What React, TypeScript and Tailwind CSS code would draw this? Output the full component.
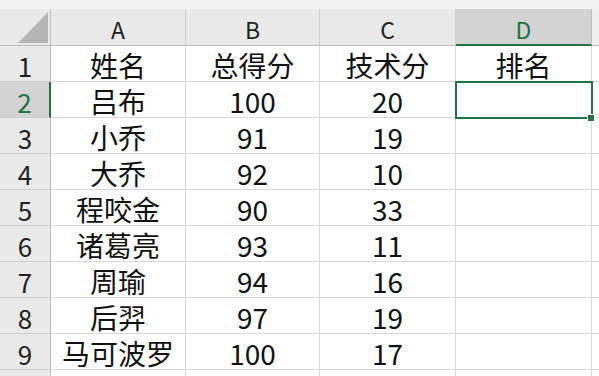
import React from "react";

const rows: string[][] = [
  ["姓名", "总得分", "技术分", "排名"],
  ["吕布", "100", "20", ""],
  ["小乔", "91", "19", ""],
  ["大乔", "92", "10", ""],
  ["程咬金", "90", "33", ""],
  ["诸葛亮", "93", "11", ""],
  ["周瑜", "94", "16", ""],
  ["后羿", "97", "19", ""],
  ["马可波罗", "100", "17", ""],
];

const colW = ["w-[135px]", "w-[134px]", "w-[136px]", "w-[136px]"];

export default function App() {
  return (
    <div className="relative w-[599px] h-[376px] overflow-hidden bg-white font-['Noto_Sans_CJK_SC','Noto_Sans',sans-serif] text-[#111]">
      {/* top strip */}
      <div className="h-[9px] bg-[#f2f2f2]" />
      {/* column header row */}
      <div className="flex h-[37px]">
        <div className="w-[51px] shrink-0 bg-[#e9e9e9] border-r border-b border-[#bdbdbd] flex items-end justify-end pr-[2px] pb-[2px]">
          <svg width="30" height="31" viewBox="0 0 30 31">
            <polygon points="0,31 30,31 30,0" fill="#b5b5b5" />
          </svg>
        </div>
        {["A", "B", "C"].map((l, i) => (
          <div
            key={l}
            className={`${colW[i]} shrink-0 bg-[#e9e9e9] border-r border-b border-[#cfcfcf] border-b-[#bdbdbd] flex items-center justify-center pt-[5px] text-[23px] leading-none text-[#222]`}
          >
            {l}
          </div>
        ))}
        <div className="w-[136px] shrink-0 bg-[#d3d3d3] border-r border-[#bdbdbd] border-b-2 border-b-[#217346] flex items-center justify-center pt-[6px] text-[23px] leading-none text-[#217346]">
          D
        </div>
        <div className="flex-1 bg-[#efefef] border-b border-[#bdbdbd]" />
      </div>
      {/* data rows */}
      {rows.map((r, ri) => {
        const sel = ri === 1;
        return (
          <div key={ri} className="flex h-[36px]">
            <div
              className={`w-[51px] shrink-0 border-b border-[#cfcfcf] flex items-center justify-center pt-[4px] text-[26px] leading-none ${
                sel
                  ? "bg-[#d3d3d3] border-r-2 border-r-[#217346] text-[#217346]"
                  : "bg-[#e9e9e9] border-r border-r-[#bdbdbd] text-[#222]"
              }`}
            >
              {ri + 1}
            </div>
            {r.map((c, ci) => (
              <div
                key={ci}
                className={`${colW[ci]} shrink-0 border-r border-b border-[#d9d9d9] flex items-center justify-center pt-[3px] text-[28px] leading-none whitespace-nowrap`}
              >
                {c}
              </div>
            ))}
            <div className="flex-1 border-b border-[#d9d9d9]" />
          </div>
        );
      })}
      {/* remainder row */}
      <div className="flex h-[10px]">
        <div className="w-[51px] shrink-0 bg-[#e9e9e9] border-r border-[#bdbdbd]" />
        <div className="w-[135px] shrink-0 border-r border-[#d9d9d9]" />
        <div className="w-[134px] shrink-0 border-r border-[#d9d9d9]" />
        <div className="w-[136px] shrink-0 border-r border-[#d9d9d9]" />
        <div className="w-[136px] shrink-0 border-r border-[#d9d9d9]" />
      </div>
      {/* selection */}
      <div className="absolute left-[455px] top-[81px] w-[138px] h-[38px] border-2 border-[#217346]" />
      <div className="absolute left-[587px] top-[114px] w-[8px] h-[8px] bg-[#217346] border border-white" />
    </div>
  );
}
